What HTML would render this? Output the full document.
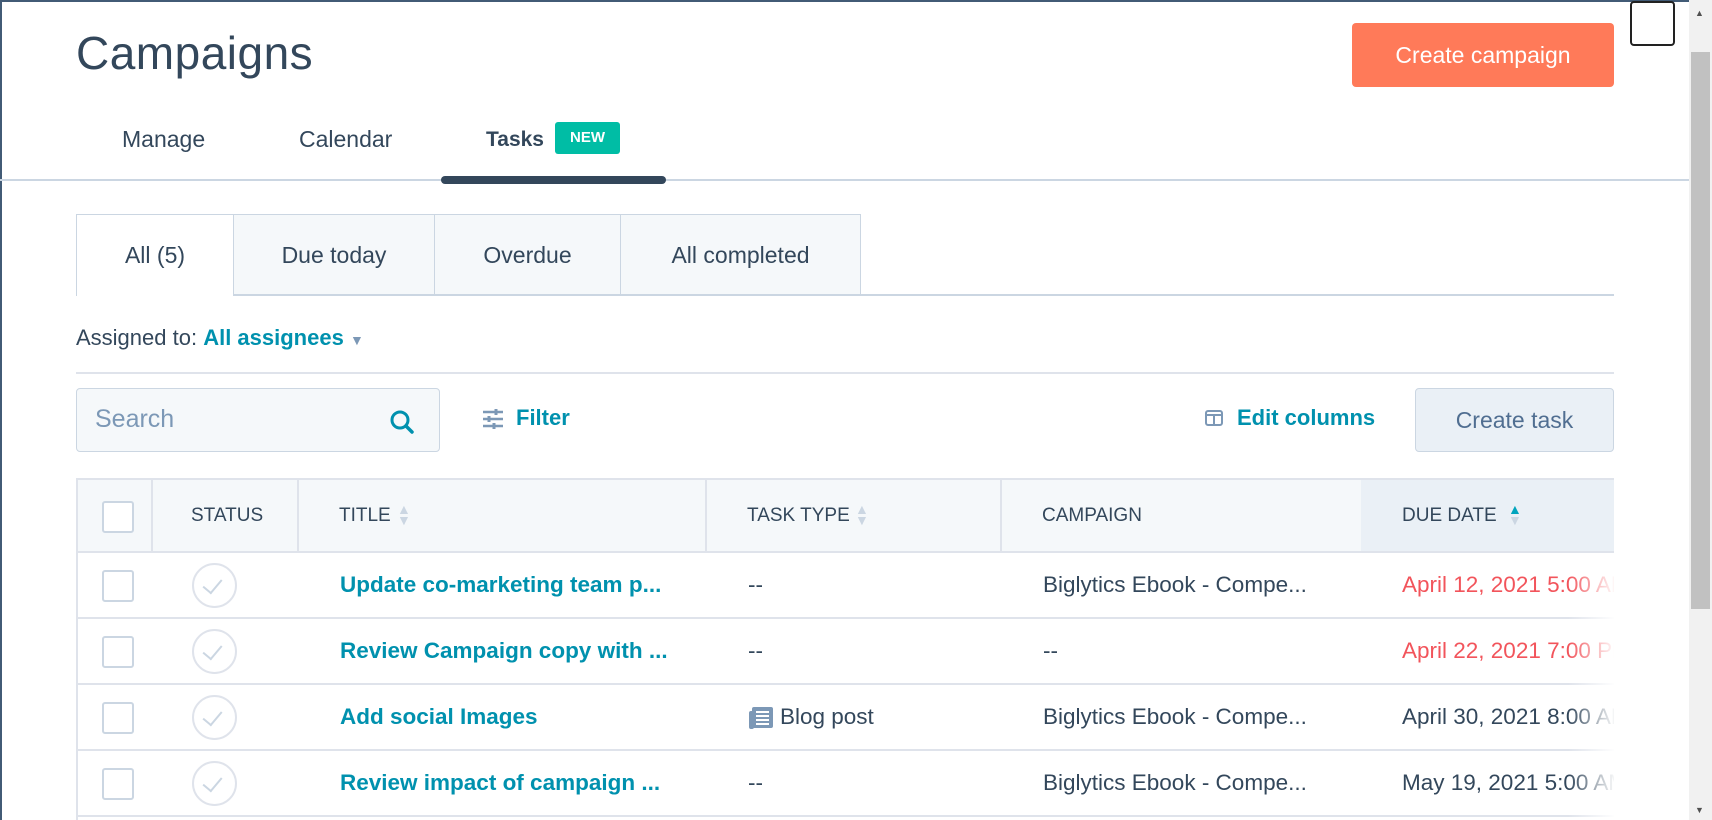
<!DOCTYPE html>
<html><head><meta charset="utf-8"><style>
*{box-sizing:border-box;margin:0;padding:0}
body{width:1712px;height:820px;overflow:hidden;background:#fff;font-family:"Liberation Sans",sans-serif;color:#33475b;position:relative}
.frame{position:absolute;left:0;top:0;width:1689px;height:820px;border-left:2px solid #425b76;border-top:2px solid #425b76}
.abs{position:absolute}
.sb{position:absolute;left:1689px;top:0;width:23px;height:820px;background:#f1f1f1}
.thumb{position:absolute;left:2px;top:52px;width:19px;height:557px;background:#c1c1c1}
h1{position:absolute;left:76px;top:26px;font-size:46px;font-weight:400;color:#33475b;letter-spacing:.5px}
.btn1{position:absolute;left:1352px;top:23px;width:262px;height:64px;background:#ff7a59;border-radius:4px;color:#fff;font-size:23px;text-align:center;line-height:64px}
.sq{position:absolute;left:1630px;top:1px;width:45px;height:45px;border:2px solid #222;border-radius:4px}
.nav{position:absolute;top:126px;font-size:23px}
.badge{position:absolute;left:555px;top:122px;width:65px;height:32px;background:#00bda5;border-radius:3px;color:#fff;font-size:15px;font-weight:700;text-align:center;line-height:32px}
.ul{position:absolute;left:441px;top:176px;width:225px;height:8px;background:#33475b;border-radius:4px}
.hl{position:absolute;left:0;top:179px;width:1689px;height:2px;background:#cbd6e2}
.tab{position:absolute;top:214px;height:81px;background:#f5f8fa;border:1px solid #cbd6e2;font-size:23px;text-align:center;line-height:80px}
.tabline{position:absolute;left:76px;top:294px;width:1538px;height:2px;background:#cbd6e2}
.link{color:#0091ae}
.search{position:absolute;left:76px;top:388px;width:364px;height:64px;background:#f5f8fa;border:1px solid #cbd6e2;border-radius:4px;font-size:25px;color:#7c98b6;padding:16px 0 0 18px}
.btn2{position:absolute;left:1415px;top:388px;width:199px;height:64px;background:#eaf0f6;border:1px solid #cbd6e2;border-radius:4px;font-size:23px;text-align:center;line-height:62px;color:#506e91}
.table{position:absolute;left:76px;top:478px;width:1538px;height:342px;border-left:2px solid #dfe3eb;overflow:hidden}
.th{position:absolute;top:0;height:75px;background:#f5f8fa;border-top:2px solid #dfe3eb;border-bottom:2px solid #dfe3eb;font-size:19px;line-height:72px;padding-left:0}
.row{position:absolute;left:0;width:1538px;height:66px;border-bottom:2px solid #dfe3eb;font-size:22.5px;line-height:64px}
.cb{position:absolute;left:24px;width:32px;height:32px;border:2px solid #cbd6e2;border-radius:3px;background:#fff}
.circ{position:absolute;left:114px;top:10px;width:45px;height:45px;border:2px solid #dfe3eb;border-radius:50%}
.circ::after{content:"";position:absolute;left:13px;top:10px;width:9px;height:16px;border-right:2px solid #cbd6e2;border-bottom:2px solid #cbd6e2;transform:rotate(40deg)}
.t{position:absolute;white-space:nowrap}
.red{color:#f2545b}
.fade{position:absolute;left:1490px;top:77px;width:48px;height:270px;background:linear-gradient(to right,rgba(255,255,255,0),#fff)}
.arr{position:absolute;font-size:14px;line-height:11px;color:#cbd6e2}
</style></head><body>
<div class="frame"></div>
<h1>Campaigns</h1>
<div class="btn1">Create campaign</div>
<div class="sq"></div>
<div class="nav" style="left:122px">Manage</div>
<div class="nav" style="left:299px">Calendar</div>
<div class="nav" style="left:486px;font-weight:700;font-size:21px;top:128px">Tasks</div>
<div class="badge">NEW</div>
<div class="hl"></div>
<div class="ul"></div>

<div class="tab" style="left:76px;width:158px;background:#fff;border-bottom:none;height:82px;z-index:2">All (5)</div>
<div class="tab" style="left:233px;width:202px">Due today</div>
<div class="tab" style="left:434px;width:187px">Overdue</div>
<div class="tab" style="left:620px;width:241px">All completed</div>
<div class="tabline"></div>

<div class="abs" style="left:76px;top:325px;font-size:22px">Assigned to: <span class="link" style="font-weight:700">All assignees</span> <span style="color:#7c98b6;font-size:14px">▼</span></div>
<div class="abs" style="left:76px;top:372px;width:1538px;height:2px;background:#dfe3eb"></div>

<div class="search">Search
<svg class="abs" style="left:312px;top:20px" width="26" height="26" viewBox="0 0 26 26"><circle cx="11" cy="11" r="8" fill="none" stroke="#0091ae" stroke-width="3"/><path d="M17 17l6 6" stroke="#0091ae" stroke-width="3.5" stroke-linecap="round"/></svg></div>
<svg class="abs" style="left:482px;top:408px" width="22" height="22" viewBox="0 0 22 22"><g stroke="#7c98b6" stroke-width="2.5"><path d="M1 4h20M1 11h20M1 18h20"/></g><g stroke="#7c98b6" stroke-width="3"><path d="M14 1v6M7 8v6M12 15v6"/></g></svg>
<div class="abs link" style="left:516px;top:405px;font-size:22px;font-weight:700">Filter</div>
<svg class="abs" style="left:1205px;top:410px" width="18" height="16" viewBox="0 0 18 16"><rect x="1" y="1" width="16" height="14" rx="2" fill="none" stroke="#7c98b6" stroke-width="2"/><path d="M1 5h16M9 5v10" stroke="#7c98b6" stroke-width="2"/></svg>
<div class="abs link" style="left:1237px;top:405px;font-size:22px;font-weight:700">Edit columns</div>
<div class="btn2">Create task</div>

<div class="table">
 <div class="th" style="left:0;width:75px;border-right:2px solid #dfe3eb"><div class="cb" style="top:21px"></div></div>
 <div class="th" style="left:75px;width:146px;border-right:2px solid #dfe3eb"><span style="margin-left:38px">STATUS</span></div>
 <div class="th" style="left:221px;width:408px;border-right:2px solid #dfe3eb"><span style="margin-left:40px">TITLE</span></div>
 <div class="th" style="left:629px;width:295px;border-right:2px solid #dfe3eb"><span style="margin-left:40px">TASK TYPE</span></div>
 <div class="th" style="left:924px;width:359px"><span style="margin-left:40px">CAMPAIGN</span></div>
 <div class="th" style="left:1283px;width:255px;background:#eaf0f6"><span style="margin-left:41px">DUE DATE</span></div>
 <div class="arr" style="left:319px;top:26px">▲<br>▼</div>
 <div class="arr" style="left:777px;top:26px">▲<br>▼</div>
 <div class="arr" style="left:1430px;top:26px"><span style="color:#00a4bd">▲</span><br>▼</div>

 <div class="row" style="top:75px"><div class="cb" style="top:17px"></div><div class="circ"></div>
  <div class="t link" style="left:262px;font-weight:700">Update co-marketing team p...</div><div class="t" style="left:670px">--</div><div class="t" style="left:965px">Biglytics Ebook - Compe...</div><div class="t red" style="left:1324px">April 12, 2021 5:00 AM</div></div>
 <div class="row" style="top:141px"><div class="cb" style="top:17px"></div><div class="circ"></div>
  <div class="t link" style="left:262px;font-weight:700">Review Campaign copy with ...</div><div class="t" style="left:670px">--</div><div class="t" style="left:965px">--</div><div class="t red" style="left:1324px">April 22, 2021 7:00 PM</div></div>
 <div class="row" style="top:207px"><div class="cb" style="top:17px"></div><div class="circ"></div>
  <div class="t link" style="left:262px;font-weight:700">Add social Images</div>
  <svg class="abs" style="left:670px;top:21px" width="26" height="24" viewBox="0 0 26 24"><rect x="4" y="1" width="21" height="21" rx="2" fill="#7c98b6"/><rect x="1" y="5" width="5" height="18" rx="2" fill="#7c98b6"/><path d="M8 6h13M8 10h13M8 14h13M8 18h13" stroke="#fff" stroke-width="2"/></svg>
  <div class="t" style="left:702px">Blog post</div><div class="t" style="left:965px">Biglytics Ebook - Compe...</div><div class="t" style="left:1324px">April 30, 2021 8:00 AM</div></div>
 <div class="row" style="top:273px"><div class="cb" style="top:17px"></div><div class="circ"></div>
  <div class="t link" style="left:262px;font-weight:700">Review impact of campaign ...</div><div class="t" style="left:670px">--</div><div class="t" style="left:965px">Biglytics Ebook - Compe...</div><div class="t" style="left:1324px">May 19, 2021 5:00 AM</div></div>
 <div class="fade"></div>
</div>

<div class="sb"><div class="thumb"></div>
<div class="abs" style="left:6px;top:8px;font-size:9px;color:#505050">▲</div>
<div class="abs" style="left:6px;top:805px;font-size:9px;color:#505050">▼</div></div>
</body></html>
